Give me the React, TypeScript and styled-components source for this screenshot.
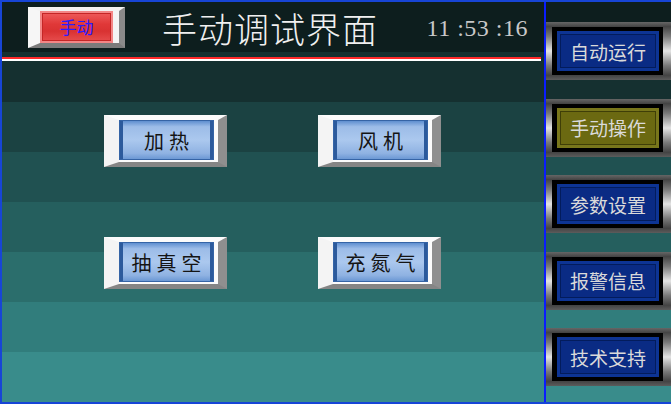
import styled, { createGlobalStyle } from 'styled-components';

const GlobalStyle = createGlobalStyle`
  html, body {
    margin: 0;
    padding: 0;
    background: #000;
  }
  * {
    box-sizing: border-box;
  }
`;

const Screen = styled.div`
  width: 671px;
  height: 404px;
  display: flex;
  border: 2px solid #1745d6;
  border-right: none;
  font-family: 'Noto Sans CJK SC', sans-serif;
  background: linear-gradient(
    to bottom,
    #0d1e1e 0 50px,
    #153030 50px 100px,
    #1b4242 100px 150px,
    #205151 150px 200px,
    #255f5e 200px 250px,
    #2b6e6c 250px 300px,
    #317d7c 300px 350px,
    #398c8b 350px 400px
  );
`;

const Main = styled.div`
  width: 542px;
  display: flex;
  flex-direction: column;
`;

const Header = styled.div`
  height: 50px;
  display: flex;
  align-items: center;
  padding-left: 26px;
  padding-right: 16px;
`;

const ModeFrame = styled.div`
  width: 97px;
  height: 41px;
  border-style: solid;
  border-width: 4px 6px 5px 12px;
  border-color: #f2f2f2 #8a8a8a #7b7b7b #f6f6f6;
  background: #f4f4f4;
  padding-right: 6px;
  display: flex;
`;

const ModeButton = styled.div`
  flex: 1;
  display: flex;
  align-items: center;
  justify-content: center;
  color: #2a1cff;
  font-size: 17px;
  background: linear-gradient(to bottom, #ee5a5a, #e03838 40%, #d93232 65%, #e64c4c);
  border: 2px solid #f38686;
  box-shadow: inset 0 0 0 1px #c42626;
`;

const Title = styled.div`
  margin-left: 37px;
  color: #f0f0f0;
  font-size: 35px;
  letter-spacing: 1px;
  font-weight: 300;
  line-height: 1;
`;

const Clock = styled.div`
  margin-left: auto;
  padding-top: 3px;
  color: #c8c8c8;
  font-family: 'Liberation Serif', serif;
  font-size: 24px;
  letter-spacing: 0.5px;
`;

const Rule = styled.div`
  margin: 5px 3px 0 0;
  height: 4px;
  border-top: 2px solid #ff2a2a;
  background: #ffffff;
`;

const ButtonGrid = styled.div`
  display: grid;
  grid-template-columns: 123px 123px;
  column-gap: 91px;
  row-gap: 70px;
  padding: 54px 0 0 102px;
`;

const KeyFrame = styled.div`
  width: 123px;
  height: 52px;
  border-style: solid;
  border-width: 5px 9px 5px 15px;
  border-color: #fbfbfb #8f8f8f #858585 #f4f4f4;
  background: #fbfbfb;
  padding: 0 4px 2px 0;
  display: flex;
`;

const KeyFace = styled.div`
  flex: 1;
  display: flex;
  align-items: center;
  justify-content: center;
  padding-left: 5px;
  color: #141414;
  font-size: 20px;
  letter-spacing: 5px;
  border: 1px solid #3564a6;
  background:
    linear-gradient(
      to right,
      #2c5a9c 0 3px,
      transparent 3px calc(100% - 3px),
      #2c5a9c calc(100% - 3px)
    ),
    linear-gradient(
      to bottom,
      #5f8fd0 0,
      #9cbce8 15%,
      #abc8ee 50%,
      #8fb2e2 85%,
      #6c98d4 100%
    );
`;

const Side = styled.div`
  width: 127px;
  border-left: 2px solid #0a1cff;
  display: flex;
  flex-direction: column;
  gap: 18.5px;
  padding-top: 20px;
`;

const NavFrame = styled.div`
  height: 58px;
  padding: 5px 8px 5px 6px;
  display: flex;
  background: linear-gradient(
    to bottom,
    #666 0,
    #444 8%,
    #7a7a7a 25%,
    #e4e4e4 50%,
    #7a7a7a 75%,
    #444 92%,
    #5c5c5c 100%
  );
`;

const NavWell = styled.div`
  flex: 1;
  background: #000;
  padding: 4px 4px 4px 5px;
  display: flex;
`;

const NavButton = styled.div<{ $active?: boolean }>`
  flex: 1;
  display: flex;
  align-items: center;
  justify-content: center;
  color: #dadada;
  font-size: 19px;
  background: ${(p) => (p.$active ? '#6b6911' : '#0a2b84')};
  box-shadow: ${(p) =>
    p.$active
      ? 'inset 0 0 0 3px #78761b, inset 0 0 0 4px #3f3e07'
      : 'inset 0 0 0 3px #0d3494, inset 0 0 0 4px #031c5c'};
`;

const keys = ['加热', '风机', '抽真空', '充氮气'];

const menu = [
  { label: '自动运行' },
  { label: '手动操作', active: true },
  { label: '参数设置' },
  { label: '报警信息' },
  { label: '技术支持' },
];

export default function App() {
  return (
    <>
      <GlobalStyle />
      <Screen>
        <Main>
          <Header>
            <ModeFrame>
              <ModeButton>手动</ModeButton>
            </ModeFrame>
            <Title>手动调试界面</Title>
            <Clock>11 :53 :16</Clock>
          </Header>
          <Rule />
          <ButtonGrid>
            {keys.map((k) => (
              <KeyFrame key={k}>
                <KeyFace>{k}</KeyFace>
              </KeyFrame>
            ))}
          </ButtonGrid>
        </Main>
        <Side>
          {menu.map((m) => (
            <NavFrame key={m.label}>
              <NavWell>
                <NavButton $active={m.active}>{m.label}</NavButton>
              </NavWell>
            </NavFrame>
          ))}
        </Side>
      </Screen>
    </>
  );
}
